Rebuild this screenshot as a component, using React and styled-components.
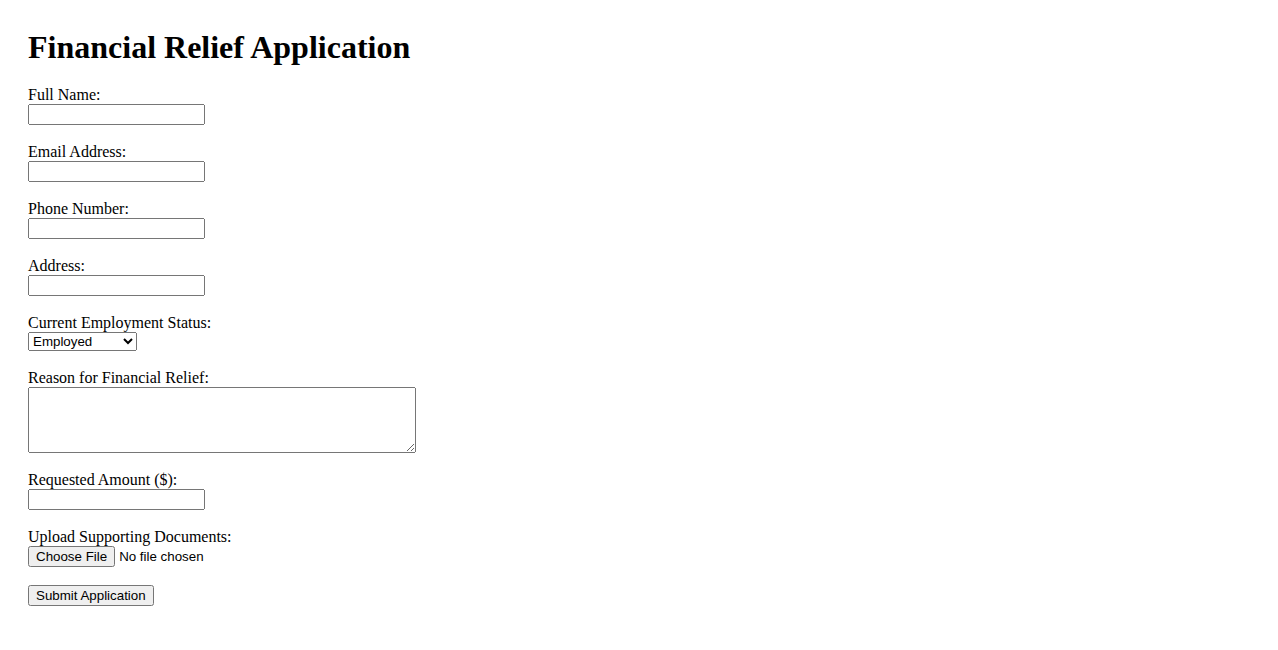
import React from "react";
import styled, { createGlobalStyle } from "styled-components";

const GlobalStyle = createGlobalStyle`
  html, body {
    margin: 0;
    padding: 0;
    background: #ffffff;
  }
  body {
    font-family: "Liberation Serif", "Times New Roman", serif;
    font-size: 16px;
    color: #000000;
  }
`;

const Page = styled.main`
  padding: 29px 28px 20px;
`;

const Title = styled.h1`
  font-family: "Liberation Serif", "Times New Roman", serif;
  font-size: 32px;
  font-weight: bold;
  line-height: normal;
  margin: 0 0 20.44px;
`;

const Form = styled.form`
  display: flex;
  flex-direction: column;
  align-items: flex-start;
`;

const Field = styled.div`
  display: flex;
  flex-direction: column;
  align-items: flex-start;
  margin-bottom: 18px;
`;

const Label = styled.label`
  display: block;
  font-family: "Liberation Serif", "Times New Roman", serif;
  font-size: 16px;
  line-height: 18px;
`;

const controlFont = `
  font-family: "Liberation Sans", Arial, sans-serif;
  font-size: 13.333px;
  color: #000;
`;

const TextInput = styled.input`
  ${controlFont}
  box-sizing: border-box;
  width: 177px;
  height: 21px;
  margin: 0;
`;

const Select = styled.select`
  ${controlFont}
  box-sizing: border-box;
  width: 109px;
  height: 19px;
  margin: 0;
`;

const TextArea = styled.textarea`
  font-family: "Liberation Mono", "Courier New", monospace;
  font-size: 13.333px;
  box-sizing: border-box;
  width: 388px;
  height: 66px;
  margin: 0;
`;

const FileInput = styled.input`
  ${controlFont}
  height: 21px;
  margin: 0;
`;

const SubmitButton = styled.button`
  ${controlFont}
  box-sizing: border-box;
  height: 21px;
  margin: 0;
`;

const textFields = [
  { id: "fullName", label: "Full Name:", type: "text" },
  { id: "email", label: "Email Address:", type: "email" },
  { id: "phone", label: "Phone Number:", type: "tel" },
  { id: "address", label: "Address:", type: "text" },
];

export default function App() {
  return (
    <>
      <GlobalStyle />
      <Page>
        <Title>Financial Relief Application</Title>
        <Form onSubmit={(e) => e.preventDefault()}>
          {textFields.map((f) => (
            <Field key={f.id}>
              <Label htmlFor={f.id}>{f.label}</Label>
              <TextInput id={f.id} name={f.id} type={f.type} />
            </Field>
          ))}
          <Field>
            <Label htmlFor="employment">Current Employment Status:</Label>
            <Select id="employment" name="employment" defaultValue="employed">
              <option value="employed">Employed</option>
              <option value="unemployed">Unemployed</option>
              <option value="self-employed">Self-Employed</option>
              <option value="retired">Retired</option>
            </Select>
          </Field>
          <Field>
            <Label htmlFor="reason">Reason for Financial Relief:</Label>
            <TextArea id="reason" name="reason" rows={4} cols={50} />
          </Field>
          <Field>
            <Label htmlFor="amount">Requested Amount ($):</Label>
            <TextInput id="amount" name="amount" type="number" />
          </Field>
          <Field>
            <Label htmlFor="documents">Upload Supporting Documents:</Label>
            <FileInput id="documents" name="documents" type="file" />
          </Field>
          <SubmitButton type="submit">Submit Application</SubmitButton>
        </Form>
      </Page>
    </>
  );
}
